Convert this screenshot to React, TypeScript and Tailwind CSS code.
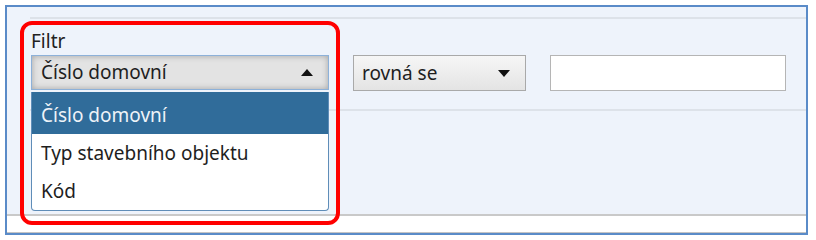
import React from "react";

const font = { fontFamily: '"Noto Sans", "Open Sans", sans-serif' };

function Tri({ up }: { up?: boolean }) {
  return (
    <svg width="12" height="7" viewBox="0 0 12 7" className="block">
      {up ? (
        <polygon points="0,7 12,7 6,0" fill="#111" />
      ) : (
        <polygon points="0,0 12,0 6,7" fill="#111" />
      )}
    </svg>
  );
}

export default function App() {
  return (
    <div className="w-[816px] h-[240px] bg-white pt-[5px] pl-[5px]" style={font}>
      <div className="relative w-[803px] h-[230px] border-2 border-[#5a8bc8] bg-[#eef3fb] flex flex-col">
        <div className="h-[10px]" />
        <div className="ml-[23px] h-[2px] bg-[#dde2e9]" />
        <div className="pl-[24px] pt-[10px] text-[19px] leading-[24px] text-[#222]">Filtr</div>
        <div className="pl-[24px] pt-[2px] flex items-start text-[19px] text-[#1e1e1e]">
          <div className="relative w-[298px] h-[35px] border border-[#8db1d9] bg-[#e3e3e3] shadow-[inset_0_0_6px_rgba(0,0,0,0.28)] flex items-center justify-between pl-[9px] pr-[15px]">
            <span>Číslo domovní</span>
            <Tri up />
          </div>
          <div className="ml-[24px] w-[173px] h-[36px] border border-[#a9a9a9] bg-gradient-to-b from-[#f6f6f6] to-[#e4e4e4] flex items-center justify-between pl-[8px] pr-[15px]">
            <span>rovná se</span>
            <Tri />
          </div>
          <div className="ml-[24px] w-[236px] h-[36px] border border-[#b5b5b5] bg-white" />
        </div>
        <div className="mt-[18px] ml-[23px] h-[2px] bg-[#dde2e9]" />
        <div className="flex-1" />
        <div className="h-[2px] bg-[#c9c9c9]" />
        <div className="h-[16px] bg-white" />
        <div className="h-[1px] bg-[#c4c4c4]" />

        {/* dropdown list */}
        <div className="absolute left-[24px] top-[85px] w-[298px] h-[119px] border border-t-0 border-[#5f8db8] rounded-b-[4px] bg-white text-[19px] text-[#1e1e1e] overflow-hidden">
          <div className="h-[42px] pt-[4px] pl-[9px] flex items-center bg-[#306c9a] text-[#eef3f8]">Číslo domovní</div>
          <div className="h-[38px] pl-[9px] flex items-center">Typ stavebního objektu</div>
          <div className="h-[38px] pl-[9px] flex items-center">Kód</div>
        </div>

        {/* red annotation */}
        <div className="absolute left-[13px] top-[14px] w-[320px] h-[204px] border-[4px] border-[#ff0000] rounded-[12px] pointer-events-none" />
      </div>
    </div>
  );
}
